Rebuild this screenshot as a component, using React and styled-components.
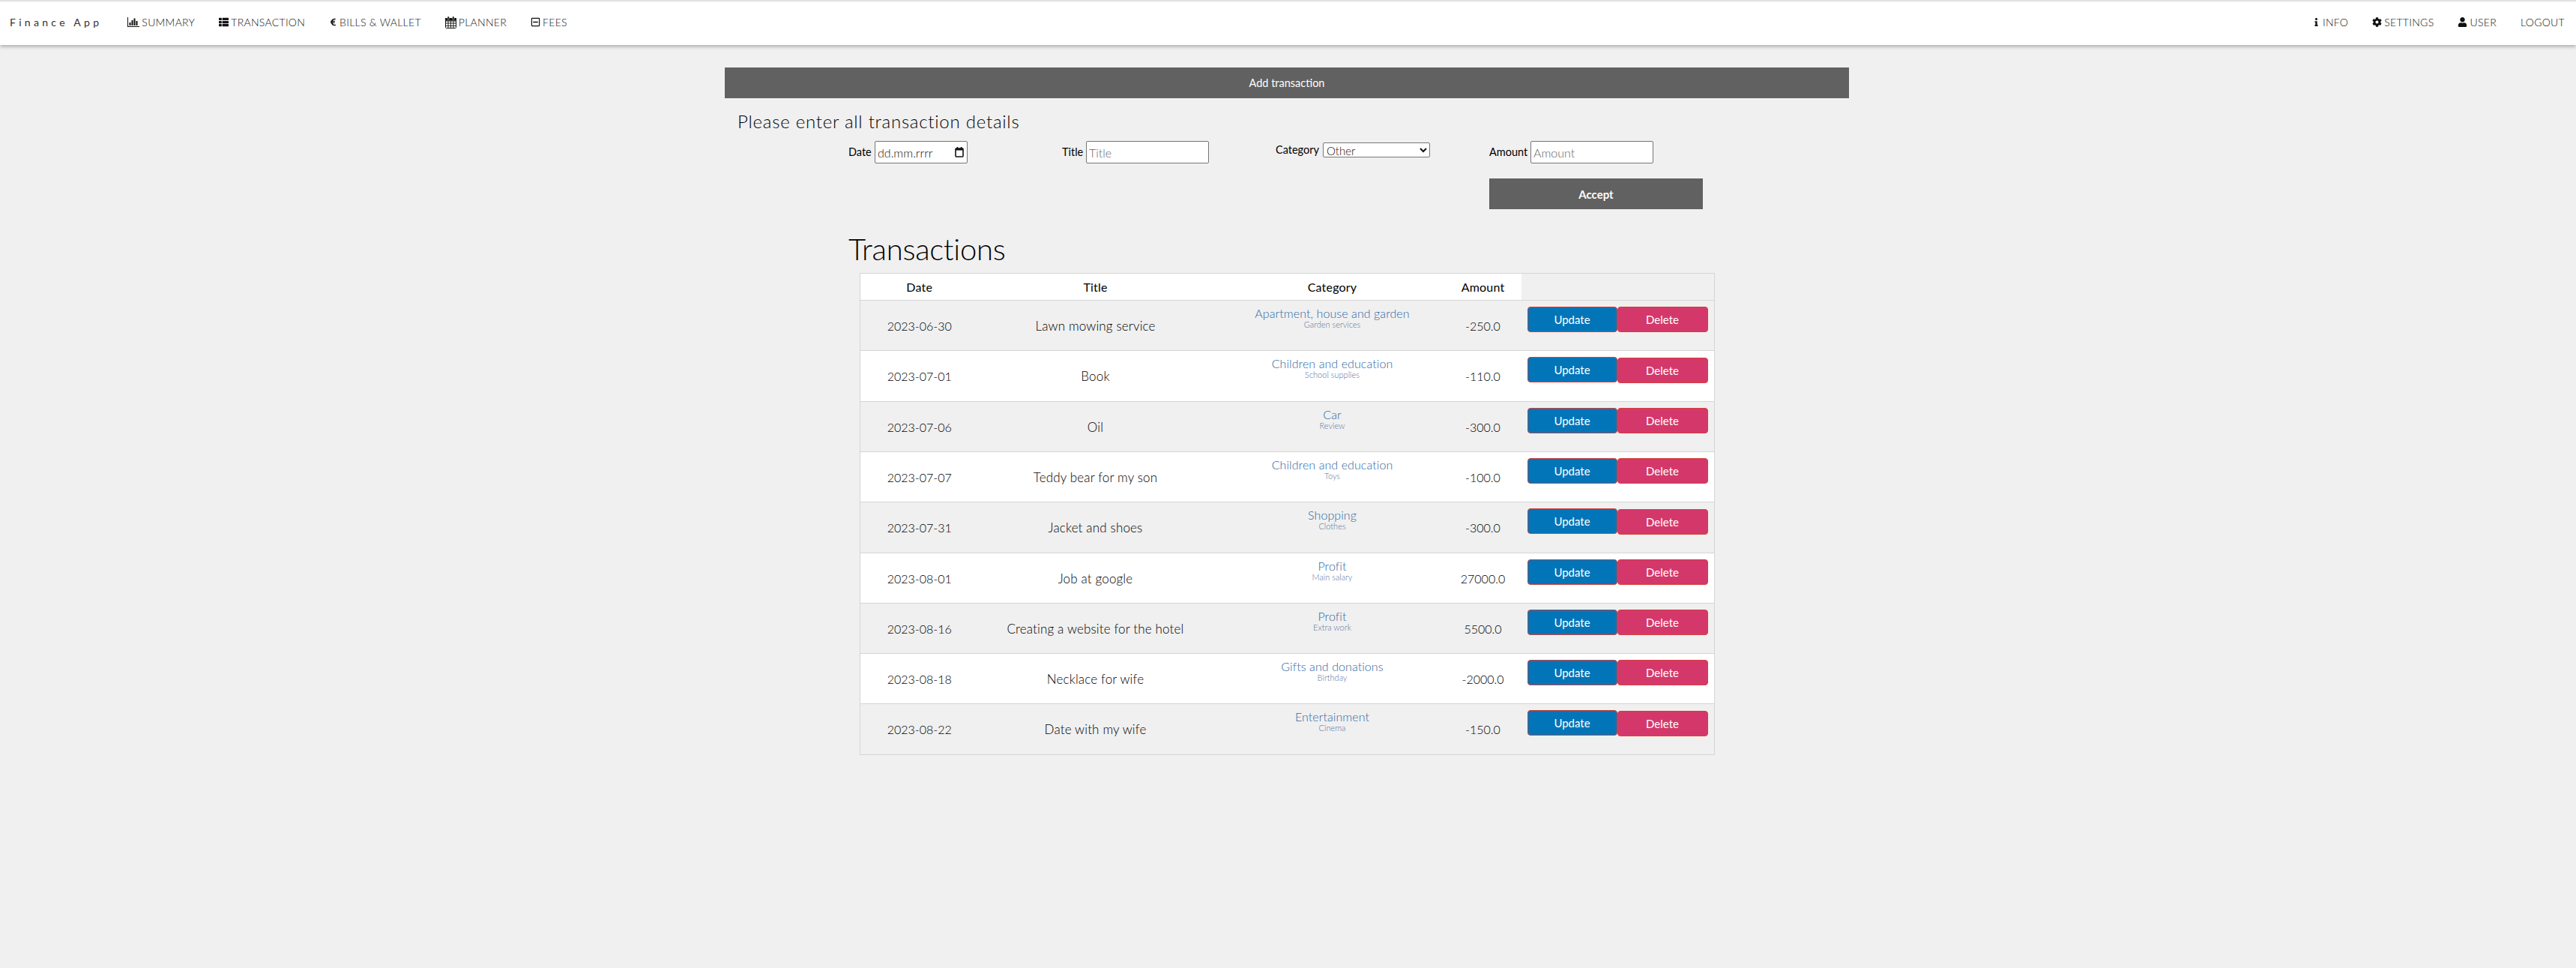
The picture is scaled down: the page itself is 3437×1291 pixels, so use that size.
import React from "react";
import styled, { createGlobalStyle } from "styled-components";
import { FaThList, FaEuroSign, FaRegMinusSquare, FaInfo, FaCog, FaUser } from "react-icons/fa";

const FONT = `"Lato", "Liberation Sans", sans-serif`;

const Global = createGlobalStyle`
  html, body { margin: 0; padding: 0; background: #f0f0f0; }
  body { font-family: ${FONT}; font-weight: 300; color: #111; min-height: 1291px; overflow: hidden; }
  * { box-sizing: border-box; }
`;

const Nav = styled.nav`
  height: 59px; margin-top: 1px; border-top: 1px solid #ddd; background: #fff;
  box-shadow: 0 2px 5px rgba(0,0,0,.3);
  display: flex; align-items: center; justify-content: space-between; padding: 0 15px 3px 13px;
`;
const NavGroup = styled.div`display: flex; align-items: center; gap: 32px;`;
const Brand = styled.span`
  font-size: 14px; letter-spacing: 4.3px; color: #333; margin-right: 2px; font-weight: 400;
`;
const NavLink = styled.a`
  display: inline-flex; align-items: center; gap: 3px; font-size: 14px; color: #111;
  text-transform: uppercase; letter-spacing: .3px;
  svg { font-size: ${p => p.$icon || 13}px; color: #111; flex: none; }
`;

const Page = styled.div`padding-left: 967px; width: 2467px;`;
const Banner = styled.div`
  height: 41px; margin-top: 30px; background: #616161; color: #fff; font-size: 14.5px;
  display: flex; align-items: center; justify-content: center; font-weight: 400;
`;
const Lead = styled.h4`margin: 15px 0 0 17px; font-size: 24px; line-height: 32px; font-weight: 300; letter-spacing: .75px; color: #000;`;

const Content = styled.div`padding-left: 165px;`;
const FormGrid = styled.form`
  display: grid; grid-template-columns: repeat(4, 285px); width: 1140px; margin-top: 10px;
`;
const Field = styled.div`display: flex; align-items: ${p => p.$top ? "flex-start" : "center"}; height: 30px; font-size: 14.5px; font-weight: 400; color: #000;`;
const Label = styled.label`width: ${p => p.$w}px; flex: none; line-height: ${p => p.$top ? "24px" : "30px"};`;
const Input = styled.input`
  width: 164px; height: 30px; border: 1px solid #767676; border-radius: 2px; padding: 0 3px; background: #fff;
  font: 300 16px ${FONT}; color: #222;
  &::placeholder { color: #666; }
`;
const DateBox = styled.div`
  width: 124px; height: 30px; border: 1px solid #767676; border-radius: 2px; padding: 0 3px; background: #fff;
  font: 300 16px ${FONT}; color: #111; display: flex; align-items: center; justify-content: space-between;
  svg { margin-right: 1px; flex: none; }
`;
const Select = styled.select`
  width: 143px; height: 20px; margin-top: 2px; border: 1px solid #767676; border-radius: 2px; background: #fff;
  font: 300 15px ${FONT}; color: #111;
`;
const Accept = styled.button`
  grid-column: 4; height: 41px; margin-top: 20px; border: 0; background: #616161; color: #fff;
  font: 700 15px ${FONT};
`;

const Heading = styled.h1`margin: 29px 0 0; font-size: 40px; line-height: 48px; font-weight: 300; color: #000; letter-spacing: -.25px;`;
const Table = styled.table`
  margin: 8px 0 0 15px; width: 1140px; table-layout: fixed; border-collapse: collapse; border: 1px solid #d5d5d5;
`;
const Head = styled.th`
  height: 36px; padding: 0 ${p => p.$pr || 0}px 0 0; background: ${p => p.$blank ? "transparent" : "#fff"}; font-size: 16px; font-weight: 400; color: #000;
  width: ${p => p.$w}px; border-bottom: 1px solid #d5d5d5; letter-spacing: .2px;
`;
const Row = styled.tr`
  height: ${p => p.$tall ? 68 : 67}px; background: ${p => p.$odd ? "#f0f0f0" : "#fff"}; border-bottom: 1px solid #d5d5d5;
`;
const Cell = styled.td`
  padding: 0 ${p => p.$pr || 0}px 0 0; text-align: center; font-size: 16px; color: #000; vertical-align: middle;
`;
const TitleCell = styled(Cell)`font-size: 17px; letter-spacing: .15px;`;
const CatCell = styled.td`padding: 7px 0 0; text-align: center; vertical-align: top;`;
const Cat = styled.div`font-size: 16px; line-height: 20px; color: #2d69a6; letter-spacing: .08px;`;
const Sub = styled.div`font-size: 11px; line-height: 10px; color: #58749f;`;
const Actions = styled.div`display: flex; align-items: flex-start; padding: 8px 0 0 8px; height: 100%;`;
const ActionCell = styled.td`padding: 0; vertical-align: top;`;
const Btn = styled.button`
  width: ${p => p.$w}px; height: 34px; border: 1px solid #d43f3a; border-radius: 4px;
  background: ${p => p.$bg}; color: #fff; font: 400 15px ${FONT}; padding: 0;
  margin-top: ${p => p.$down ? 1 : 0}px;
`;

const BarChartIcon = () => (
  <svg width="16" height="13" viewBox="0 0 16 13" fill="#111">
    <rect x="0" y="0" width="1" height="13" />
    <rect x="0" y="12" width="16" height="1" />
    <rect x="2.5" y="7" width="2" height="4" />
    <rect x="5.5" y="4" width="2" height="7" />
    <rect x="8.5" y="1.5" width="2" height="9.5" />
    <rect x="11.5" y="5" width="2" height="6" />
  </svg>
);
const CalendarIcon = () => (
  <svg width="15" height="16" viewBox="0 0 15 16" fill="none" stroke="#111" strokeWidth="1">
    <rect x=".5" y="2.5" width="14" height="13" rx="1" />
    <path d="M.5 6h14M.5 9h14M.5 12.5h14M4 6v9.5M7.5 6v9.5M11 6v9.5" strokeWidth=".9" />
    <rect x="0" y="2" width="15" height="3.5" fill="#111" stroke="none" />
    <rect x="3" y="0" width="2.4" height="4" rx=".8" fill="#111" stroke="#fff" strokeWidth=".5" />
    <rect x="9.6" y="0" width="2.4" height="4" rx=".8" fill="#111" stroke="#fff" strokeWidth=".5" />
  </svg>
);
const PickerIcon = () => (
  <svg width="12" height="14" viewBox="0 0 12 14" fill="none" stroke="#111">
    <rect x="1" y="2" width="10" height="11" rx="1" strokeWidth="1.6" />
    <path d="M1 3.2h10" strokeWidth="2.6" />
    <path d="M3.4 0v2M8.6 0v2" strokeWidth="1.6" />
  </svg>
);

const rows = [
  ["2023-06-30", "Lawn mowing service", "Apartment, house and garden", "Garden services", "-250.0", 0],
  ["2023-07-01", "Book", "Children and education", "School supplies", "-110.0", 1],
  ["2023-07-06", "Oil", "Car", "Review", "-300.0", 0],
  ["2023-07-07", "Teddy bear for my son", "Children and education", "Toys", "-100.0", 0],
  ["2023-07-31", "Jacket and shoes", "Shopping", "Clothes", "-300.0", 1],
  ["2023-08-01", "Job at google", "Profit", "Main salary", "27000.0", 0],
  ["2023-08-16", "Creating a website for the hotel", "Profit", "Extra work", "5500.0", 0],
  ["2023-08-18", "Necklace for wife", "Gifts and donations", "Birthday", "-2000.0", 0],
  ["2023-08-22", "Date with my wife", "Entertainment", "Cinema", "-150.0", 1],
];

export default function App() {
  return (
    <>
      <Global />
      <Nav>
        <NavGroup>
          <Brand>Finance App</Brand>
          <NavLink><BarChartIcon />Summary</NavLink>
          <NavLink><FaThList />Transaction</NavLink>
          <NavLink $icon={11}><FaEuroSign />Bills &amp; Wallet</NavLink>
          <NavLink><CalendarIcon />Planner</NavLink>
          <NavLink><FaRegMinusSquare />Fees</NavLink>
        </NavGroup>
        <NavGroup>
          <NavLink $icon={11}><FaInfo />Info</NavLink>
          <NavLink><FaCog />Settings</NavLink>
          <NavLink><FaUser />User</NavLink>
          <NavLink>Logout</NavLink>
        </NavGroup>
      </Nav>
      <Page>
        <Banner>Add transaction</Banner>
        <Lead>Please enter all transaction details</Lead>
        <Content>
          <FormGrid>
            <Field><Label $w={35}>Date</Label><DateBox>dd.mm.rrrr<PickerIcon /></DateBox></Field>
            <Field><Label $w={32}>Title</Label><Input placeholder="Title" /></Field>
            <Field $top><Label $w={63} $top>Category</Label><Select defaultValue="Other"><option>Other</option></Select></Field>
            <Field><Label $w={55}>Amount</Label><Input placeholder="Amount" /></Field>
            <Accept type="button">Accept</Accept>
          </FormGrid>
          <Heading>Transactions</Heading>
          <Table>
            <thead>
              <tr>
                <Head $w={158}>Date</Head>
                <Head $w={312}>Title</Head>
                <Head $w={320}>Category</Head>
                <Head $w={92} $pr={10}>Amount</Head>
                <Head $w={258} $blank />
              </tr>
            </thead>
            <tbody>
              {rows.map((r, i) => (
                <Row key={r[0]} $odd={i % 2 === 0} $tall={!!r[5]}>
                  <Cell>{r[0]}</Cell>
                  <TitleCell>{r[1]}</TitleCell>
                  <CatCell><Cat>{r[2]}</Cat><Sub>{r[3]}</Sub></CatCell>
                  <Cell $pr={10}>{r[4]}</Cell>
                  <ActionCell>
                    <Actions>
                      <Btn $w={120} $bg="#0275b8">Update</Btn>
                      <Btn $w={121} $bg="#d4386a" $down={!!r[5]}>Delete</Btn>
                    </Actions>
                  </ActionCell>
                </Row>
              ))}
            </tbody>
          </Table>
        </Content>
      </Page>
    </>
  );
}
